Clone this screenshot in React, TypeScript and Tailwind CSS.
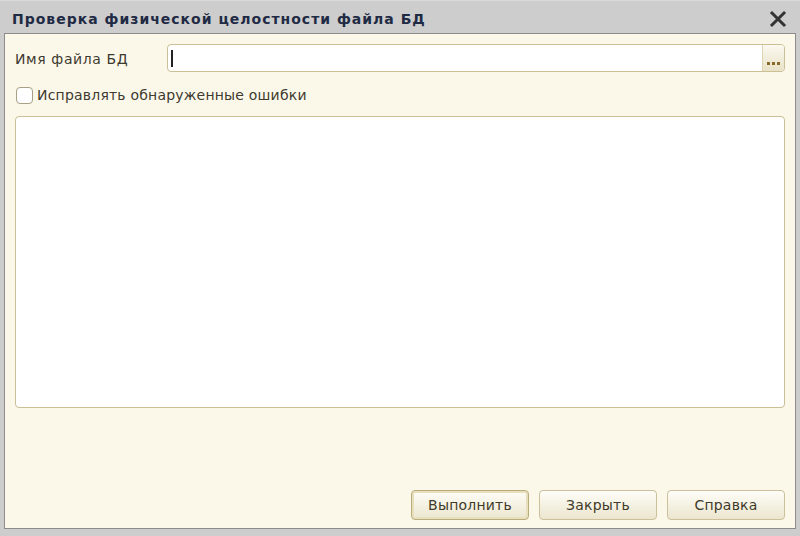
import React from "react";

const font = { fontFamily: '"DejaVu Sans", Verdana, sans-serif' };

function Btn({ label, primary }: { label: string; primary?: boolean }) {
  return (
    <div
      className={
        "w-[118px] h-[30px] rounded-[4px] border flex items-center justify-center text-[14px] tracking-[0.2px] text-[#3f3a2a] bg-gradient-to-b from-[#fefdf7] to-[#ece6cf] " +
        (primary
          ? "border-[#b9ac7c] shadow-[inset_0_0_0_2px_#e8dfbc]"
          : "border-[#cbc09b]")
      }
    >
      {label}
    </div>
  );
}

export default function App() {
  return (
    <div
      className="w-[800px] h-[536px] bg-[#cdcdcd] flex flex-col overflow-hidden"
      style={font}
    >
      <div className="h-[33px] flex items-center pl-[12px] pr-[12px] pt-[4px] border-t border-[#dadada]">
        <div className="flex-1 text-[14px] font-bold text-[#1f2a44] tracking-[1px]">
          Проверка физической целостности файла БД
        </div>
        <svg width="18" height="18" viewBox="0 0 18 18" className="mr-[1px]">
          <path d="M3 3 L15 15 M15 3 L3 15" stroke="#333" strokeWidth="3" strokeLinecap="square" />
        </svg>
      </div>
      <div className="flex-1 mx-[4px] mb-[7px] border border-[#8c8c8c] bg-[#fbf8ea] flex flex-col px-[10px] pt-[10px] pb-[8px]">
        <div className="flex items-center h-[28px]">
          <div className="w-[152px] text-[14px] text-[#3e3a30] pt-[2px] tracking-[0.6px]">Имя файла БД</div>
          <div className="flex-1 h-[28px] rounded-[4px] border border-[#cbbf95] bg-white flex items-stretch overflow-hidden">
            <div className="flex-1 flex items-center pl-[3px]">
              <div className="w-[2px] h-[17px] bg-[#222]" />
            </div>
            <div className="w-[22px] border-l border-[#ddd4b4] bg-gradient-to-b from-[#fbf9f0] to-[#e9e2c8] flex items-end justify-center pb-[6px] gap-[2px]">
              <span className="w-[3px] h-[3px] bg-[#8a6a2a]" />
              <span className="w-[3px] h-[3px] bg-[#8a6a2a]" />
              <span className="w-[3px] h-[3px] bg-[#8a6a2a]" />
            </div>
          </div>
        </div>
        <div className="flex items-center mt-[14px] h-[18px]">
          <div className="w-[17px] h-[17px] rounded-[4px] border border-[#a89f86] bg-white ml-[1px]" />
          <div className="ml-[4px] text-[14px] text-[#3e3a30] tracking-[0.2px]">Исправлять обнаруженные ошибки</div>
        </div>
        <div className="mt-[12px] h-[292px] rounded-[4px] border border-[#cbbf95] bg-white" />
        <div className="flex-1" />
        <div className="flex justify-end gap-[10px]">
          <Btn label="Выполнить" primary />
          <Btn label="Закрыть" />
          <Btn label="Справка" />
        </div>
      </div>
    </div>
  );
}
